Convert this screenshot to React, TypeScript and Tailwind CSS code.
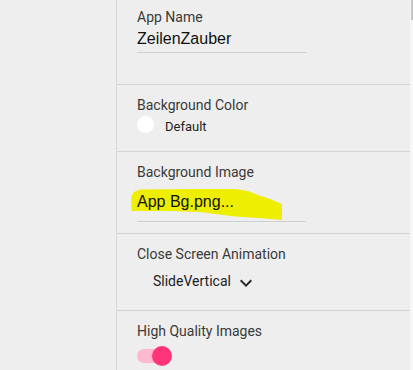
import React from "react";

const font = { fontFamily: "Roboto, 'Liberation Sans', sans-serif" };
const valueFont = { fontFamily: "'Liberation Sans', Arial, sans-serif" };

export default function App() {
  return (
    <div className="relative flex h-[370px] w-[413px] overflow-hidden bg-[#eeeeee]" style={font}>
      <svg
        className="pointer-events-none absolute left-0 top-0"
        width="413"
        height="370"
        viewBox="0 0 413 370"
      >
        <polygon
          fill="#eeee00"
          points="131.5,196 134,192 140,189.5 200,189 235,189 248,191 258,195 270,199 282,204 282,220 265,218.5 235,216.5 200,212 170,211 131.5,211"
        />
      </svg>
      <div className="w-[117px] shrink-0 border-r border-[#d6d6d6]" />
      <div className="relative flex min-w-0 flex-1 flex-col">
        {/* App Name */}
        <div className="h-[84px] pl-5 pt-[7px]">
          <div className="text-[14px] leading-[20px] text-[#3a3a3a]">App Name</div>
          <div
            className="w-[169px] border-b border-[#cfcfcf] pb-[1px] text-[16px] leading-[24px] text-[#111]"
            style={valueFont}
          >
            ZeilenZauber
          </div>
        </div>
        {/* Background Color */}
        <div className="h-[67px] border-t border-[#d3d3d3] pl-5 pt-[10px]">
          <div className="text-[14px] leading-[20px] text-[#3a3a3a]">Background Color</div>
          <div className="mt-[1px] flex h-[17px] items-center">
            <div className="h-[17px] w-[17px] rounded-full bg-white" />
            <span className="ml-[11px] mt-[3px] text-[13px] leading-[17px] text-[#1e1e1e]">Default</span>
          </div>
        </div>
        {/* Background Image */}
        <div className="h-[82px] border-t border-[#d3d3d3] pl-5 pt-[10px]">
          <div className="text-[14px] leading-[20px] text-[#3a3a3a]">Background Image</div>
          <div
            className="mt-[8px] w-[169px] border-b border-[#cfcfcf] pb-[7px] text-[16px] leading-[24px] text-[#111]"
            style={valueFont}
          >
            App Bg.png...
          </div>
        </div>
        {/* Close Screen Animation */}
        <div className="h-[77px] border-t border-[#d3d3d3] pl-5 pt-[10px]">
          <div className="text-[14px] leading-[20px] text-[#3a3a3a]">Close Screen Animation</div>
          <div className="mt-[7px] flex items-start pl-4">
            <span className="text-[14px] leading-[20px] text-[#222]">SlideVertical</span>
            <svg className="ml-[3px]" width="24" height="24" viewBox="0 0 24 24">
              <path fill="#2a2a2a" d="M16.59 8.59L12 13.17 7.41 8.59 6 10l6 6 6-6z" />
            </svg>
          </div>
        </div>
        {/* High Quality Images */}
        <div className="flex-1 border-t border-[#d3d3d3] pl-5 pt-[10px]">
          <div className="text-[14px] leading-[20px] text-[#3a3a3a]">High Quality Images</div>
          <div className="relative mt-[5px] h-[20px] w-[35px]">
            <div className="absolute left-0 top-[3px] h-[14px] w-[34px] rounded-full bg-[#ffb8cd]" />
            <div className="absolute right-0 top-0 h-[20px] w-[20px] rounded-full bg-[#ff3479]" />
          </div>
        </div>
      </div>
      <div className="w-[3px] shrink-0 bg-[#f7f7f7]">
        <div className="ml-[1px] h-[20px] w-[2px] bg-[#c4c4c4]" />
      </div>
    </div>
  );
}
